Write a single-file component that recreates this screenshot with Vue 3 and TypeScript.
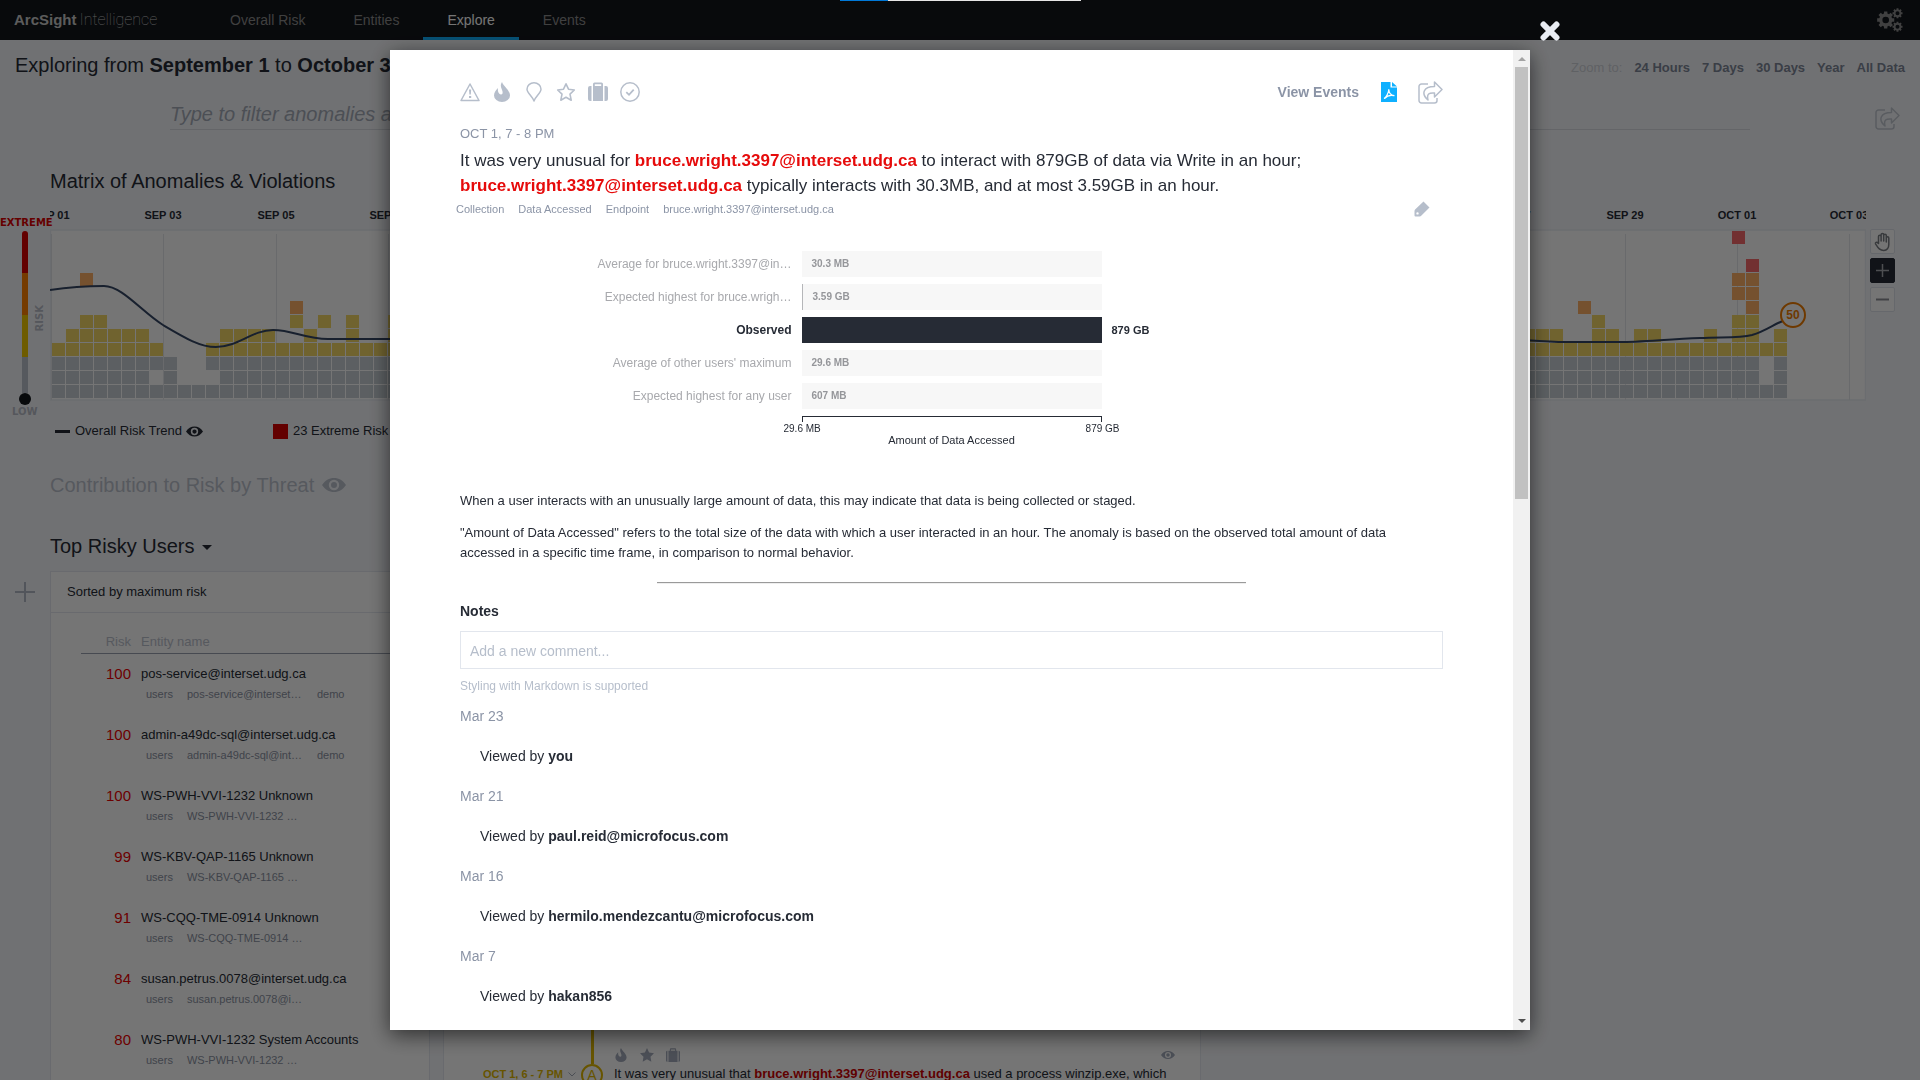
<script setup lang="ts">
import { ref } from 'vue'

interface Entity { risk: number; name: string; alias: string; extra?: string }
interface Bar { label: string; value: string; fill: number; observed?: boolean }
interface Cell { x: number; y: number; tone: string }

const tabs = ['Overall Risk', 'Entities', 'Explore', 'Events']
const activeTab = ref('Explore')
const zoomLevels = ['24 Hours', '7 Days', '30 Days', 'Year', 'All Data']

const entities: Entity[] = [
  { risk: 100, name: 'pos-service@interset.udg.ca', alias: 'pos-service@interset…', extra: 'demo' },
  { risk: 100, name: 'admin-a49dc-sql@interset.udg.ca', alias: 'admin-a49dc-sql@int…', extra: 'demo' },
  { risk: 100, name: 'WS-PWH-VVI-1232 Unknown', alias: 'WS-PWH-VVI-1232 …' },
  { risk: 99, name: 'WS-KBV-QAP-1165 Unknown', alias: 'WS-KBV-QAP-1165 …' },
  { risk: 91, name: 'WS-CQQ-TME-0914 Unknown', alias: 'WS-CQQ-TME-0914 …' },
  { risk: 84, name: 'susan.petrus.0078@interset.udg.ca', alias: 'susan.petrus.0078@i…' },
  { risk: 80, name: 'WS-PWH-VVI-1232 System Accounts', alias: 'WS-PWH-VVI-1232 …' },
]

const tags = ['Collection', 'Data Accessed', 'Endpoint', 'bruce.wright.3397@interset.udg.ca']

const bars: Bar[] = [
  { label: 'Average for bruce.wright.3397@in…', value: '30.3 MB', fill: 0 },
  { label: 'Expected highest for bruce.wrigh…', value: '3.59 GB', fill: 1 },
  { label: 'Observed', value: '879 GB', fill: 300, observed: true },
  { label: "Average of other users' maximum", value: '29.6 MB', fill: 0 },
  { label: 'Expected highest for any user', value: '607 MB', fill: 0 },
]

const history = [
  { date: 'Mar 23', who: 'you' },
  { date: 'Mar 21', who: 'paul.reid@microfocus.com' },
  { date: 'Mar 16', who: 'hermilo.mendezcantu@microfocus.com' },
  { date: 'Mar 7', who: 'hakan856' },
]
const comment = ref('')

// Matrix: one column per six hours, rows counted from the bottom.
const COLUMNS = 124
const gaps: Record<number, number[]> = {
  0: [],
  1: [7, 9, 10, 11, 122],
  2: [9, 10, 122],
  3: [8, 9, 10],
}
const sparse: { row: number; tone: string; columns: number[] }[] = [
  { row: 4, tone: 'mid', columns: [1, 2, 3, 4, 5, 6, 12, 13, 14, 15, 18, 21, 24, 105, 106, 107, 110, 111, 113, 114, 118, 120, 121, 123] },
  { row: 5, tone: 'mid', columns: [2, 3, 17, 19, 21, 24, 110, 120, 121] },
  { row: 6, tone: 'high', columns: [17, 109, 121] },
  { row: 7, tone: 'high', columns: [120, 121] },
  { row: 8, tone: 'high', columns: [2, 120, 121] },
  { row: 9, tone: 'extreme', columns: [121] },
  { row: 11, tone: 'extreme', columns: [120] },
]
const at = (column: number, row: number, tone: string): Cell => ({ x: 2 + column * 14, y: 185 - row * 14, tone })
const cells: Cell[] = []
for (let row = 0; row < 4; row++) {
  for (let c = 0; c < COLUMNS; c++) {
    if (!gaps[row].includes(c)) cells.push(at(c, row, row === 3 ? 'mid' : 'low'))
  }
}
for (const s of sparse) for (const c of s.columns) cells.push(at(c, s.row, s.tone))

const dates = Array.from({ length: 17 }, (_, i) => {
  const day = 1 + i * 2
  const label = day <= 30 ? `SEP ${String(day).padStart(2, '0')}` : `OCT ${String(day - 30).padStart(2, '0')}`
  return { x: 1 + Math.round(i * 112.4), label }
})

const trend =
  'M0 90 C20 87 38 86 54 86 C72 86 92 112 113 125 C135 138 150 147 166 147 C188 147 202 130 223 130 ' +
  'C243 130 255 139 278 139 L1460 139 C1490 141 1500 142 1515 142 L1570 142 ' +
  'C1590 142 1620 139 1650 138 C1675 137 1690 138 1702 135 C1716 131 1724 124 1733 121'

function gear(cx: number, cy: number, outer: number, inner: number, hole: number): string {
  const teeth = 8
  const pts: string[] = []
  for (let i = 0; i < teeth; i++) {
    const a = (i / teeth) * Math.PI * 2
    for (const [off, r] of [[-0.26, inner], [-0.19, outer], [0.19, outer], [0.26, inner]]) {
      pts.push(`${(cx + Math.cos(a + off) * r).toFixed(2)} ${(cy + Math.sin(a + off) * r).toFixed(2)}`)
    }
  }
  return `M${pts.join('L')}ZM${cx - hole} ${cy}a${hole} ${hole} 0 1 0 ${hole * 2} 0a${hole} ${hole} 0 1 0 ${-hole * 2} 0Z`
}
const gears = gear(8.7, 12, 8.7, 6.6, 3.3) + gear(20.5, 5.3, 5.1, 3.9, 2) + gear(20.5, 18.7, 5.1, 3.9, 2)

const flame = 'M10 0C11 4 18 8 18 13.500a8 6.500 0 0 1-16 0C2 10 4.200 8 6 6C5.500 9 6.500 12 9 12.600C12.500 12 9.500 7 9 5C8.600 3 9 1.500 10 0Z'
const share = 'M10 3H3.500A2.500 2.500 0 0 0 1 5.500V19.500A2.500 2.500 0 0 0 3.500 22H16.500A2.500 2.500 0 0 0 19 19.500V17M16.500 1L24 8.500L16.500 16V12C11 11.500 8.500 13 10 19C3 13 5 5.500 16.500 5.500Z'
const eye = 'M0 7C3 2.500 7 0 12 0S21 2.500 24 7C21 11.500 17 14 12 14S3 11.500 0 7ZM12 1.800A5.200 5.200 0 1 0 12 12.200A5.200 5.200 0 1 0 12 1.800ZM12 4A3 3 0 1 1 12 10A3 3 0 1 1 12 4Z'
</script>

<template>
  <div class="app">
    <header class="nav">
      <a class="logo" href="#"><b>ArcSight</b> <span>Intelligence</span></a>
      <nav class="tabs">
        <a v-for="t in tabs" :key="t" href="#" :class="{ active: t === activeTab }" @click.prevent="activeTab = t">{{ t }}</a>
      </nav>
      <button class="bare" aria-label="Settings">
        <svg width="26" height="24" viewBox="0 0 26 24"><path :d="gears" fill="#8c8c8c" fill-rule="evenodd" /></svg>
      </button>
    </header>

    <main class="page">
      <div class="range">
        <h1>Exploring from <b>September 1</b> to <b>October 3</b></h1>
        <div class="zoom">
          <span>Zoom to:</span>
          <a v-for="z in zoomLevels" :key="z" href="#">{{ z }}</a>
        </div>
      </div>

      <div class="filter">
        <input type="text" placeholder="Type to filter anomalies and violations" aria-label="Filter anomalies" />
        <button class="bare" aria-label="Share view">
          <svg width="25" height="23" viewBox="0 0 25 23"><path :d="share" fill="none" stroke="#c3c8d2" stroke-width="1.500" stroke-linejoin="round" /></svg>
        </button>
      </div>

      <h2 class="heading">Matrix of Anomalies &amp; Violations</h2>
      <section class="matrix">
        <div class="scale">
          <span class="scale-top">EXTREME</span>
          <div class="scale-body">
            <div class="track"><i class="t-red" /><i class="t-orange" /><i class="t-yellow" /><i class="t-grey" /><i class="knob" /></div>
            <span class="scale-side">RISK</span>
          </div>
          <span class="scale-low">LOW</span>
        </div>
        <svg class="plot" viewBox="0 0 1816 201">
          <rect x="0.500" y="30" width="1815" height="170" fill="#fff" stroke="#e9edf3" stroke-width="1.500" />
          <line v-for="d in dates" :key="d.label" :x1="d.x + 0.500" :x2="d.x + 0.500" y1="34" y2="200" stroke="#e4e7ec" />
          <rect v-for="(c, i) in cells" :key="i" :x="c.x" :y="c.y" width="13" height="13" :class="c.tone" />
          <text v-for="d in dates" :key="'t' + d.label" :x="d.x" y="19" text-anchor="middle" class="tick">{{ d.label }}</text>
          <path :d="trend" fill="none" stroke="#354765" stroke-width="2" />
          <circle cx="1743" cy="115" r="12" fill="#fff" stroke="#f07d00" stroke-width="2" />
          <text x="1743" y="119" text-anchor="middle" class="score">50</text>
        </svg>
        <div class="tools">
          <button aria-label="Pan">
            <svg width="17" height="20" viewBox="0 0 17 20"><path d="M4.500 11.500V4.500a1.300 1.300 0 0 1 2.600 0V9V2.800a1.300 1.300 0 0 1 2.600 0V9V3.500a1.300 1.300 0 0 1 2.600 0V10V6a1.200 1.200 0 0 1 2.500 0V12.500C14.800 16 13 18.500 9.800 18.500C6 18.500 4.500 16.500 1.500 11.800C1 10.500 2.800 9.800 3.500 10.600Z" fill="#fff" stroke="#7b7e84" stroke-width="1.500" stroke-linejoin="round" /></svg>
          </button>
          <button class="dark" aria-label="Zoom in"><svg width="13" height="13" viewBox="0 0 13 13"><path d="M0 6.500H13M6.500 0V13" stroke="#a8abb0" stroke-width="1.500" /></svg></button>
          <button aria-label="Zoom out"><svg width="13" height="13" viewBox="0 0 13 13"><path d="M0 6.500H13" stroke="#8c8f95" stroke-width="2" /></svg></button>
        </div>
      </section>

      <div class="legend">
        <i class="dash" /><span>Overall Risk Trend</span>
        <svg class="legend-eye" width="17" height="11" viewBox="0 0 24 14"><path :d="eye" fill="#262b35" fill-rule="evenodd" /></svg>
        <i class="swatch" /><span>23 Extreme Risk</span>
      </div>

      <h2 class="heading muted">Contribution to Risk by Threat <svg width="24" height="14" viewBox="0 0 24 14"><path :d="eye" fill="#bcc2ce" fill-rule="evenodd" /></svg></h2>
      <h2 class="heading">Top Risky Users <i class="caret" /></h2>

      <section class="panels">
        <button class="bare add" aria-label="Add panel"><svg width="20" height="20" viewBox="0 0 20 20"><path d="M0 10H20M10 0V20" stroke="#b4bac6" stroke-width="2" /></svg></button>
        <div class="card users">
          <div class="card-head">Sorted by maximum risk</div>
          <table>
            <thead><tr><th class="risk">Risk</th><th>Entity name</th></tr></thead>
            <tbody>
              <tr v-for="e in entities" :key="e.name">
                <td class="risk">{{ e.risk }}</td>
                <td>
                  <div class="name">{{ e.name }}</div>
                  <div class="sub"><span>users</span><span class="alias">{{ e.alias }}</span><span v-if="e.extra">{{ e.extra }}</span></div>
                </td>
              </tr>
            </tbody>
          </table>
        </div>
        <div class="card feed">
          <div class="feed-time">OCT 1, 6 - 7 PM
            <svg width="8" height="5" viewBox="0 0 8 5"><path d="M0.500 0.500L4 4L7.500 0.500" fill="none" stroke="#a4abb8" /></svg>
          </div>
          <div class="rail"><i /><b>A</b></div>
          <div class="feed-body">
            <div class="feed-icons">
              <svg width="14" height="14" viewBox="0 0 20 20"><path :d="flame" fill="#a4abbb" /></svg>
              <svg width="14" height="14" viewBox="0 0 20 20"><path d="M10 0L13 6.500L20 7.400L15 12.400L16.200 19.500L10 16L3.800 19.500L5 12.400L0 7.400L7 6.500Z" fill="#a4abbb" /></svg>
              <svg width="14" height="14" viewBox="0 0 20 20"><path d="M0 6a2 2 0 0 1 2-2V20a2 2 0 0 1-2-2ZM20 6a2 2 0 0 0-2-2V20a2 2 0 0 0 2-2ZM3.500 4H5.500V2a1.500 1.500 0 0 1 1.500-1.500H13A1.500 1.500 0 0 1 14.500 2V4H16.500V20H3.500ZM7 4H13V2H7Z" fill="#a4abbb" fill-rule="evenodd" /></svg>
              <svg class="seen" width="14" height="10" viewBox="0 0 24 14"><path :d="eye" fill="#a4abbb" fill-rule="evenodd" /></svg>
            </div>
            <p>It was very unusual that <b>bruce.wright.3397@interset.udg.ca</b> used a process winzip.exe, which</p>
          </div>
        </div>
      </section>
    </main>

    <div class="overlay">
      <div class="capture"><i /></div>
      <div class="dialog" role="dialog" aria-label="Anomaly details">
        <button class="bare close" aria-label="Close"><svg width="20" height="20" viewBox="0 0 20 20"><path d="M3.500 3.500L16.500 16.500M16.500 3.500L3.500 16.500" stroke="#e8ecf2" stroke-width="6" stroke-linecap="round" /></svg></button>
        <div class="content">
          <div class="toolbar">
            <button class="bare" aria-label="Warning"><svg width="20" height="20" viewBox="0 0 20 20"><path d="M10 2L19 18.500H1Z" fill="none" stroke="#b6becb" stroke-width="1.500" stroke-linejoin="round" /><path d="M9 7.500h2.200l-.4 5H9.400ZM9 14h2.200v2H9Z" fill="#b6becb" /></svg></button>
            <button class="bare" aria-label="Hot"><svg width="20" height="20" viewBox="0 0 20 20"><path :d="flame" fill="#b6becb" /></svg></button>
            <button class="bare" aria-label="Pin"><svg width="20" height="20" viewBox="0 0 20 20"><path d="M10 19C8.500 14.500 3 11 3 7.200A7 6.400 0 0 1 17 7.200C17 11 11.500 14.500 10 19Z" fill="none" stroke="#b6becb" stroke-width="1.500" stroke-linejoin="round" /></svg></button>
            <button class="bare" aria-label="Favourite"><svg width="20" height="20" viewBox="0 0 20 20"><path d="M10 1.800L12.500 7.200L18.300 8L14 12.100L15.200 18.200L10 15.300L4.800 18.200L6 12.100L1.700 8L7.500 7.200Z" fill="none" stroke="#b6becb" stroke-width="1.600" stroke-linejoin="round" /></svg></button>
            <button class="bare" aria-label="Case"><svg width="20" height="20" viewBox="0 0 20 20"><path d="M0 6a2 2 0 0 1 2-2h1.500V19H2a2 2 0 0 1-2-2ZM20 6a2 2 0 0 0-2-2h-1.500V19H18a2 2 0 0 0 2-2ZM5 4V2a1.500 1.500 0 0 1 1.500-1.500H13.500A1.500 1.500 0 0 1 15 2V19H5ZM6.800 4H13.200V2.200H6.800Z" fill="#b6becb" fill-rule="evenodd" /></svg></button>
            <button class="bare" aria-label="Resolved"><svg width="20" height="20" viewBox="0 0 20 20"><circle cx="10" cy="10" r="9.200" fill="none" stroke="#b6becb" stroke-width="1.500" /><path d="M6.300 10.200L9 12.800L13.700 7.600" fill="none" stroke="#b6becb" stroke-width="1.800" /></svg></button>
            <a class="view" href="#">View Events</a>
            <button class="bare pdf" aria-label="Export PDF"><svg width="16" height="20" viewBox="0 0 16 20"><path d="M0 0H9.500V5.500H16V20H0ZM11 0L16 4.500H11Z" fill="#0fb0ff" /><path d="M3 16.500C5 15.500 7.500 11.500 7.800 7.500C8 10.500 10 13.200 13 13.600C9.500 12.800 6 13.800 3.500 16.500" fill="none" stroke="#fff" stroke-width="1.200" stroke-linejoin="round" /></svg></button>
            <button class="bare" aria-label="Share anomaly"><svg width="25" height="23" viewBox="0 0 25 23"><path :d="share" fill="none" stroke="#b6becb" stroke-width="1.500" stroke-linejoin="round" /></svg></button>
          </div>

          <div class="when">OCT 1, 7 - 8 PM</div>
          <p class="summary">It was very unusual for <b>bruce.wright.3397@interset.udg.ca</b> to interact with 879GB of data via Write in an hour;<br /><b>bruce.wright.3397@interset.udg.ca</b> typically interacts with 30.3MB, and at most 3.59GB in an hour.</p>
          <div class="tags">
            <span v-for="t in tags" :key="t">{{ t }}</span>
            <button class="bare" aria-label="Edit tags"><svg width="16" height="16" viewBox="0 0 16 16"><path d="M9.500 0.500L15.500 6.500L7.200 14.800A2 2 0 0 1 5.800 15.400H1.500A1 1 0 0 1 .5 14.400V10A2 2 0 0 1 1.100 8.600ZM3.500 11.200A1.200 1.200 0 1 0 3.500 13.600A1.200 1.200 0 1 0 3.500 11.200Z" fill="#b6becb" fill-rule="evenodd" /></svg></button>
          </div>

          <div class="chart">
            <div v-for="b in bars" :key="b.label" class="bar-row" :class="{ observed: b.observed }">
              <span class="bar-label">{{ b.label }}</span>
              <div class="bar"><i :style="{ width: b.fill + 'px' }" /><span v-if="!b.observed">{{ b.value }}</span></div>
              <span v-if="b.observed" class="bar-value">{{ b.value }}</span>
            </div>
            <div class="axis">
              <div class="axis-line" />
              <div class="axis-ends"><span>29.6 MB</span><span>879 GB</span></div>
              <div class="axis-title">Amount of Data Accessed</div>
            </div>
          </div>

          <p class="about">When a user interacts with an unusually large amount of data, this may indicate that data is being collected or staged.</p>
          <p class="about">"Amount of Data Accessed" refers to the total size of the data with which a user interacted in an hour. The anomaly is based on the observed total amount of data accessed in a specific time frame, in comparison to normal behavior.</p>
          <hr />
          <label class="notes" for="comment">Notes</label>
          <input id="comment" v-model="comment" class="comment" type="text" placeholder="Add a new comment..." />
          <div class="hint">Styling with Markdown is supported</div>
          <template v-for="h in history" :key="h.date">
            <div class="date">{{ h.date }}</div>
            <div class="viewed">Viewed by <b>{{ h.who }}</b></div>
          </template>
        </div>
        <div class="scrollbar">
          <i class="up" /><i class="thumb" /><i class="down" />
        </div>
      </div>
    </div>
  </div>
</template>

<style>
body { margin: 0; }
</style>

<style scoped>
* { box-sizing: border-box; }
.app { height: 100vh; display: flex; flex-direction: column; overflow: hidden; background: #f5f7fb; color: #262b35; font: 13px/20px "Liberation Sans", Arial, sans-serif; }
h1, h2, p { margin: 0; font-weight: normal; }
a { text-decoration: none; color: inherit; }
svg { display: block; }
i { display: block; }
input { font-family: inherit; }
.bare { border: 0; padding: 0; background: none; display: block; }

.nav { flex: none; height: 40px; background: #12161b; display: flex; align-items: center; padding: 0 17px 0 14px; }
.logo { width: 192px; color: #c8c8c8; font-size: 15px; display: flex; gap: 3px; }
.logo span { font-family: Roboto, sans-serif; font-weight: 100; font-size: 16px; }
.tabs { display: flex; align-self: stretch; flex: 1; }
.tabs a { padding: 0 24px; font-size: 14px; line-height: 40px; color: #8c8c8c; }
.tabs a.active { color: #fff; box-shadow: inset 0 -3px #0fb0ff; }

.page { flex: 1; min-height: 0; display: flex; flex-direction: column; }
.range { flex: none; height: 50px; display: flex; align-items: center; justify-content: space-between; padding: 0 15px; }
.range h1 { font-size: 20px; }
.zoom { display: flex; gap: 12px; padding-top: 6px; color: #7e8798; font-weight: bold; }
.zoom span { font-weight: normal; color: #d0d3da; }
.filter { flex: none; display: flex; align-items: flex-end; justify-content: space-between; margin: 6px 20px 0 170px; height: 34px; }
.filter input { width: 1580px; height: 34px; border: 0; border-bottom: 1px solid #d9dce3; padding: 4px 0 0; background: none; font-size: 20px; font-style: italic; outline: none; }
.filter input::placeholder { color: #a6adb9; opacity: 1; }
.heading { flex: none; font-size: 20px; line-height: 30px; margin-left: 50px; display: flex; align-items: center; gap: 8px; }
.filter + .heading { margin-top: 36px; }
.muted { color: #bcc2ce; margin: 29px 0 31px 50px; }
.caret { border: 5px solid transparent; border-top-color: currentColor; border-bottom: 0; margin-top: 2px; }

.matrix { flex: none; display: flex; align-items: flex-start; height: 216px; margin-top: 4px; }
.scale { width: 50px; flex: none; padding-top: 18px; font: bold 10px/10px "DejaVu Sans", sans-serif; color: #b9bdc8; }
.scale-top { display: block; color: #d00; margin-bottom: 3px; }
.scale-body { display: flex; align-items: center; gap: 4px; margin-left: 19px; height: 174px; }
.scale-low { display: block; margin-left: 12px; margin-top: 2px; }
.track { width: 12px; display: flex; flex-direction: column; align-items: center; }
.track i { width: 6px; height: 42px; }
.t-red { background: #d80000; border-radius: 3px 3px 0 0; }
.t-orange { background: #ff8000; }
.t-yellow { background: #f0c800; }
.t-grey { background: #bcc2ce; }
.track .t-grey { height: 36px; }
.track .knob { width: 12px; height: 12px; border-radius: 6px; background: #12161b; }
.scale-side { writing-mode: vertical-rl; transform: rotate(180deg); }
.plot { flex: 1; min-width: 0; height: auto; overflow: hidden; }
.low { fill: #c8d0d6; }
.mid { fill: #f3d768; }
.high { fill: #ffb068; }
.extreme { fill: #f8696c; }
.tick { font-size: 11px; font-weight: bold; fill: #262b35; }
.score { font-size: 12px; font-weight: bold; fill: #f07d00; }
.tools { flex: none; width: 54px; padding: 29px 0 0 4px; display: flex; flex-direction: column; gap: 4px; }
.tools button { width: 25px; height: 25px; padding: 0; border: 1px solid #dfe3eb; border-radius: 2px; background: #fff; display: flex; align-items: center; justify-content: center; }
.tools .dark { background: #262b35; border-color: #262b35; }

.legend { flex: none; display: flex; align-items: center; margin: 5px 0 0 55px; height: 20px; }
.dash { width: 15px; height: 3px; background: #262b35; margin-right: 5px; }
.legend-eye { margin: 0 70px 0 4px; }
.swatch { width: 15px; height: 15px; background: #d80000; margin-right: 5px; }

.panels { flex: 1; min-height: 0; display: flex; margin-top: 10px; overflow: hidden; }
.add { width: 50px; flex: none; align-self: flex-start; padding: 11px 15px; }
.card { background: #fff; border: 1px solid #e4e8f0; border-bottom: 0; }
.users { width: 380px; margin-right: 13px; }
.card-head { height: 41px; line-height: 40px; padding-left: 16px; border-bottom: 1px solid #e4e8f0; }
table { border-collapse: collapse; margin: 18px 0 0 30px; width: 318px; }
th { height: 22px; padding: 0 0 0 10px; font-weight: normal; text-align: left; color: #bcc2ce; border-bottom: 1px solid #9ba2b1; }
td { padding: 10px 0 11px 10px; vertical-align: top; }
th.risk, td.risk { width: 50px; padding-left: 0; text-align: right; }
td.risk { color: #e00; font-size: 15px; }
.sub { display: flex; gap: 14px; padding-left: 5px; font-size: 11px; color: #8c93a3; }
.alias { width: 116px; white-space: nowrap; }
.feed { width: 758px; display: flex; align-items: flex-end; overflow: hidden; }
.feed-time { width: 137px; flex: none; display: flex; align-items: center; justify-content: flex-end; gap: 5px; padding-right: 5px; margin-bottom: -4px; font-size: 11px; font-weight: bold; color: #e0b800; }
.rail { align-self: stretch; width: 22px; display: flex; flex-direction: column; align-items: center; margin-bottom: -6px; }
.rail i { flex: 1; width: 3px; background: #e0b800; }
.rail b { width: 22px; height: 22px; border: 2px solid #e0b800; border-radius: 11px; color: #e0b800; font: 14px/18px "Liberation Sans", sans-serif; text-align: center; }
.feed-body { flex: 1; margin-left: 11px; margin-bottom: -4px; }
.feed-icons { display: flex; gap: 12px; align-items: center; height: 18px; }
.seen { margin-left: auto; margin-right: 25px; }
.feed-body b { color: #d00000; }

.overlay { position: fixed; inset: 0; background: rgba(0, 0, 0, 0.54); display: flex; justify-content: center; padding: 50px 0; }
.capture { position: absolute; top: 0; left: 840px; width: 241px; height: 1px; background: #e6e6e6; }
.capture i { width: 48px; height: 1px; background: #0078d7; }
.dialog { position: relative; width: 1140px; background: #fff; display: flex; box-shadow: 0 5px 20px rgba(0, 0, 0, 0.6); }
.close { position: absolute; top: -29px; right: -30px; }
.content { flex: 1; min-width: 0; padding: 30px 70px 0; overflow: hidden; }
.toolbar { display: flex; align-items: center; gap: 12px; height: 24px; }
.view { margin-left: auto; font-size: 14px; font-weight: bold; color: #8b94a6; }
.pdf { margin: 0 9px 0 10px; }
.when { margin-top: 20px; color: #8b94a6; }
.summary { margin-top: 4px; font-size: 17px; line-height: 25px; }
.summary b { color: #e60b0b; }
.tags { display: flex; align-items: center; gap: 14px; height: 20px; margin: 1px 13px 0 -4px; font-size: 11px; color: #8b94a6; }
.tags button { margin-left: auto; }

.chart { margin-top: 32px; }
.bar-row { display: grid; grid-template-columns: 1fr 300px 1fr; gap: 10px; height: 25px; margin-bottom: 8px; line-height: 26px; }
.bar-label { text-align: right; font-size: 12px; color: #a8a9ad; }
.bar { display: flex; background: #f7f7f7; font-size: 10px; font-weight: bold; color: #95969a; }
.bar i { background: #b5b6b9; }
.bar span { padding-left: 10px; }
.observed .bar i { background: #262b35; }
.observed .bar-label { color: #262b35; font-weight: bold; }
.bar-value { font-size: 11px; font-weight: bold; }
.axis { width: 300px; margin: 0 auto; }
.axis-line { height: 6px; border: 1px solid #262b35; border-bottom: 0; }
.axis-ends { display: flex; justify-content: space-between; margin: 0 -18px; font-size: 10px; line-height: 14px; }
.axis-title { text-align: center; font-size: 11px; line-height: 8px; }

.about { margin-top: 12px; }
.chart + .about { margin-top: 47px; }
hr { width: 60%; margin: 19px auto 0; border: 0; border-top: 1px solid #9a9a9a; border-bottom: 1px solid #eee; }
.notes { display: block; margin: 17px 0 10px; font-size: 14px; font-weight: bold; }
.comment { display: block; width: 100%; height: 38px; padding: 2px 9px 0; border: 1px solid #e2e6ed; font-size: 14px; outline: none; }
.comment::placeholder { color: #b6becb; opacity: 1; }
.hint { margin-top: 7px; font-size: 12px; color: #b6becb; }
.date { margin-top: 10px; font-size: 14px; color: #8b94a6; }
.viewed { margin: 20px 0 0 20px; font-size: 14px; }
.viewed + .date { margin-top: 20px; }

.scrollbar { width: 17px; flex: none; background: #f1f1f1; display: flex; flex-direction: column; align-items: center; }
.up { border: 4px solid transparent; border-bottom-color: #a3a3a3; border-top: 0; margin: 7px 0 6px; }
.thumb { width: 13px; height: 432px; background: #c1c1c1; }
.down { border: 4px solid transparent; border-top-color: #505050; border-bottom: 0; margin: auto 0 7px; }
</style>
